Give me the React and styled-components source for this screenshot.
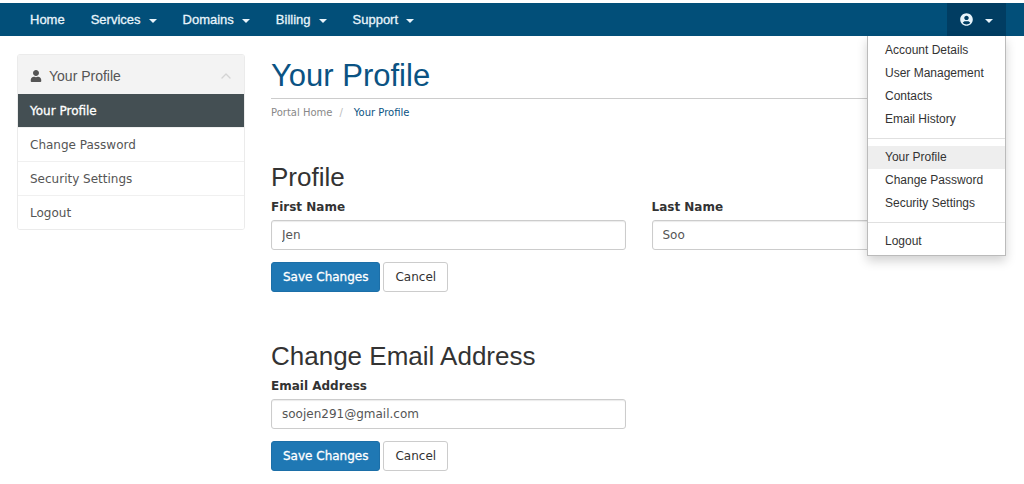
import React from "react";
import styled, { createGlobalStyle } from "styled-components";
import { FaUser, FaUserCircle } from "react-icons/fa";
import { ChevronUp } from "lucide-react";

const GlobalStyle = createGlobalStyle`
  * {
    box-sizing: border-box;
  }
  body {
    margin: 0;
    background: #fff;
    color: #333;
    font-family: Verdana, "DejaVu Sans", sans-serif;
    font-size: 12px;
    line-height: 18px;
  }
  a {
    text-decoration: none;
  }
`;

const sans = `"Liberation Sans", Arial, sans-serif`;

const Navbar = styled.nav`
  display: flex;
  justify-content: space-between;
  margin-top: 3px;
  padding: 0 18px 0 17px;
  background: #024f79;
`;

const NavGroup = styled.div`
  position: relative;
  display: flex;
`;

const NavItem = styled.button`
  display: flex;
  align-items: center;
  gap: ${props => props.$account ? "12px" : "8px"};
  height: 33px;
  padding: 0 13px;
  border: none;
  background: ${props => props.$account ? "#013d62" : "transparent"};
  color: #e8f4fb;
  font-family: ${sans};
  font-size: 13px;
  -webkit-text-stroke: 0.3px currentColor;
  cursor: pointer;
`;

const Caret = styled.span`
  margin-top: 2px;
  border-top: 4px solid currentColor;
  border-left: 4px solid transparent;
  border-right: 4px solid transparent;
`;

const Dropdown = styled.div`
  position: absolute;
  top: 100%;
  right: 0;
  z-index: 10;
  width: 139px;
  padding: 3px 0 2px;
  background: #fff;
  border: 1px solid #bbb;
  border-top: none;
  box-shadow: 0 5px 10px rgba(0, 0, 0, 0.18);
`;

const DropdownLink = styled.a`
  display: block;
  padding: 0 17px;
  line-height: 23px;
  font-family: ${sans};
  font-size: 12px;
  white-space: nowrap;
  color: #333;
  background: ${props => props.$active ? "#eee" : "transparent"};
`;

const Divider = styled.div`
  height: 1px;
  margin: 7px 0;
  background: #e0e0e0;
`;

const Page = styled.div`
  display: grid;
  grid-template-columns: 228px minmax(0, 1fr);
  gap: 26px;
  align-items: start;
  padding: 18px 18px 12px 17px;
`;

const Panel = styled.aside`
  border: 1px solid #ebebeb;
  border-radius: 3px;
  overflow: hidden;
`;

const PanelHeading = styled.div`
  display: flex;
  align-items: center;
  gap: 7px;
  height: 39px;
  padding: 2px 10px 0 12px;
  background: #f3f3f3;
  color: #555;
  font-family: ${sans};
  font-size: 14px;
`;

const PanelTitle = styled.span`
  flex: 1;
`;

const PanelLink = styled.a`
  display: block;
  padding: 8px 12px 7px;
  color: ${props => props.$active ? "#fff" : "#555"};
  background: ${props => props.$active ? "#444f53" : "#fff"};
  -webkit-text-stroke: ${props => props.$active ? "0.3px currentColor" : "0"};
  & + & {
    border-top: 1px solid #f0f0f0;
  }
`;

const Title = styled.h1`
  margin: 0;
  padding: 4px 0;
  border-bottom: 1px solid #ccc;
  color: #0b5383;
  font-family: ${sans};
  font-size: 31px;
  font-weight: normal;
  line-height: 36px;
`;

const Breadcrumb = styled.div`
  display: flex;
  padding: 5px 0 7px;
  font-size: 10px;
`;

const Crumb = styled.a`
  color: ${props => props.$current ? "#0b5383" : "#888"};
`;

const Slash = styled.span`
  padding: 0 11px 0 7px;
  color: #bbb;
`;

const Form = styled.form`
  padding-top: ${props => props.$first ? "34px" : "50px"};
`;

const Heading = styled.h2`
  margin: 0 0 7px;
  font-family: ${sans};
  font-size: 26px;
  font-weight: normal;
  line-height: 28px;
`;

const Fields = styled.div`
  display: grid;
  grid-template-columns: 1fr 1fr;
  gap: 26px;
`;

const Label = styled.label`
  display: block;
  margin-bottom: 4px;
  font-weight: bold;
`;

const Input = styled.input`
  display: block;
  width: 100%;
  height: 30px;
  padding: 0 10px;
  border: 1px solid #ccc;
  border-radius: 3px;
  background: #fff;
  color: #555;
  font-family: inherit;
  font-size: 12px;
  box-shadow: inset 0 1px 1px rgba(0, 0, 0, 0.08);
`;

const Buttons = styled.div`
  display: flex;
  gap: 3px;
  padding-top: 12px;
`;

const Button = styled.button`
  height: 30px;
  padding: 0 11px;
  border: 1px solid ${props => props.$primary ? "#1c6fa8" : "#ccc"};
  border-radius: 3px;
  background: ${props => props.$primary ? "#1f78b4" : "#fff"};
  color: ${props => props.$primary ? "#fff" : "#333"};
  font-family: inherit;
  font-size: 12px;
  -webkit-text-stroke: ${props => props.$primary ? "0.3px currentColor" : "0"};
  cursor: pointer;
`;

const menus = ["Services", "Domains", "Billing", "Support"];

function Field({ id, label, type = "text", value }) {
  return (
    <div>
      <Label htmlFor={id}>{label}</Label>
      <Input id={id} type={type} defaultValue={value} />
    </div>
  );
}

function Actions() {
  return (
    <Buttons>
      <Button type="submit" $primary>Save Changes</Button>
      <Button type="reset">Cancel</Button>
    </Buttons>
  );
}

function App() {
  return (
    <>
      <GlobalStyle />
      <Navbar>
        <NavGroup>
          <NavItem as="a" href="#">Home</NavItem>
          {menus.map(name => (
            <NavItem key={name} type="button">{name}<Caret /></NavItem>
          ))}
        </NavGroup>
        <NavGroup>
          <NavItem type="button" $account aria-label="Account">
            <FaUserCircle size={13} />
            <Caret />
          </NavItem>
          <Dropdown>
            <DropdownLink href="#">Account Details</DropdownLink>
            <DropdownLink href="#">User Management</DropdownLink>
            <DropdownLink href="#">Contacts</DropdownLink>
            <DropdownLink href="#">Email History</DropdownLink>
            <Divider />
            <DropdownLink href="#" $active>Your Profile</DropdownLink>
            <DropdownLink href="#">Change Password</DropdownLink>
            <DropdownLink href="#">Security Settings</DropdownLink>
            <Divider />
            <DropdownLink href="#">Logout</DropdownLink>
          </Dropdown>
        </NavGroup>
      </Navbar>
      <Page>
        <Panel>
          <PanelHeading>
            <FaUser size={12} />
            <PanelTitle>Your Profile</PanelTitle>
            <ChevronUp size={16} strokeWidth={2} color="#d4d4d4" />
          </PanelHeading>
          <PanelLink href="#" $active>Your Profile</PanelLink>
          <PanelLink href="#">Change Password</PanelLink>
          <PanelLink href="#">Security Settings</PanelLink>
          <PanelLink href="#">Logout</PanelLink>
        </Panel>
        <main>
          <Title>Your Profile</Title>
          <Breadcrumb>
            <Crumb href="#">Portal Home</Crumb>
            <Slash>/</Slash>
            <Crumb href="#" $current>Your Profile</Crumb>
          </Breadcrumb>
          <Form $first>
            <Heading>Profile</Heading>
            <Fields>
              <Field id="first" label="First Name" value="Jen" />
              <Field id="last" label="Last Name" value="Soo" />
            </Fields>
            <Actions />
          </Form>
          <Form>
            <Heading>Change Email Address</Heading>
            <Fields>
              <Field id="email" label="Email Address" type="email" value="soojen291@gmail.com" />
            </Fields>
            <Actions />
          </Form>
        </main>
      </Page>
    </>
  );
}

export default App;
